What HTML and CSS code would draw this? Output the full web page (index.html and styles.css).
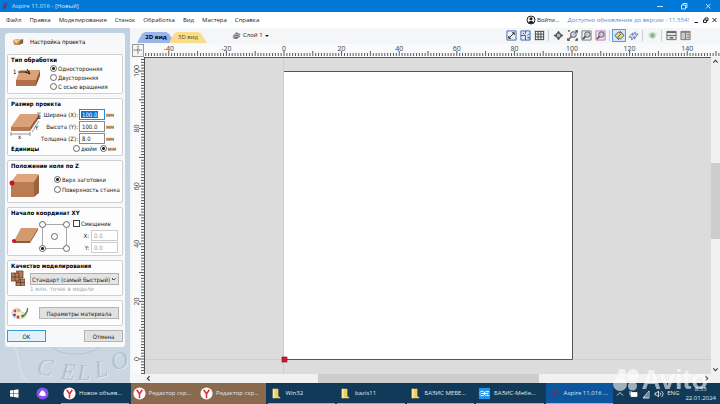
FILE: index.html
```
<!DOCTYPE html>
<html lang="ru">
  <head>
    <meta charset="utf-8">
    <title>Aspire 11.016 - [Новый]</title>
    <meta name="viewport" content="width=device-width, initial-scale=1.0">
    <link rel="stylesheet" href="styles.css">
  </head>
  <body>
    <header class="titlebar">
      <svg class="logo" viewBox="0 0 10 10"><path d="M3 9L4 4L7 1L6 6Z" fill="#8c2348"/></svg>
      <span class="title">Aspire 11.016 - [Новый]</span>
      <button class="win-btn" aria-label="Свернуть"><svg viewBox="0 0 8 8"><path d="M1 4.500H7"/></svg></button>
      <button class="win-btn" aria-label="Развернуть"><svg viewBox="0 0 8 8"><path d="M1.500 3H5.500V7H1.500ZM3 3V1.500H7V5.500H5.500"/></svg></button>
      <button class="win-btn" aria-label="Закрыть"><svg viewBox="0 0 8 8"><path d="M2 2L6.500 6.500M6.500 2L2 6.500"/></svg></button>
    </header>

    <nav class="menu">
      <a href="#">Файл</a>
      <a href="#">Правка</a>
      <a href="#">Моделирование</a>
      <a href="#">Станок</a>
      <a href="#">Обработка</a>
      <a href="#">Вид</a>
      <a href="#">Мастера</a>
      <a href="#">Справка</a>
      <a href="#" class="login">
        <svg viewBox="0 0 10 10"><circle cx="5" cy="5" r="4" fill="#fff" stroke="#222"/><circle cx="5" cy="3.800" r="1.600" fill="#222"/><path d="M2 7.500C3 5.500 7 5.500 8 7.500L5 9Z" fill="#222"/></svg>
        Войти...
      </a>
      <a href="#" class="update">Доступно обновление до версии - 11.554!</a>
      <div class="mdi">
        <button aria-label="Свернуть окно"><svg viewBox="0 0 8 8"><path d="M2 6.500H5.500"/></svg></button>
        <button aria-label="Восстановить окно"><svg viewBox="0 0 8 8"><path d="M2 4H5V6.500H2ZM3.500 4V2H6.500V4.500H5"/></svg></button>
        <button aria-label="Закрыть окно"><svg viewBox="0 0 8 8"><path d="M2 2L6 6M6 2L2 6"/></svg></button>
      </div>
    </nav>

    <main class="main">
      <aside class="side">
        <form class="dialog">
          <h1 class="dialog-title">
            <svg viewBox="0 0 14 10"><path d="M1 4L4 2H13L11 4Z" fill="#e6b982"/><path d="M1 4H9L8 9H3L2 7Z" fill="#c98b4b"/><path d="M9 4L13 2V7L8 9Z" fill="#8c5a2c"/><path d="M2 4L5 7L8 4Z" fill="#f3d7ae"/></svg>
            Настройка проекта
          </h1>

          <section class="card">
            <h2>Тип обработки</h2>
            <div class="row">
              <svg class="pic type-pic" viewBox="0 0 36 26" width="36" height="26">
                <path d="M12 6H32L28 16H8Z" fill="#dba27a"/><path d="M8 16H28V22H8Z" fill="#b06f49"/><path d="M28 16L32 6V12L28 22Z" fill="#8f5636"/>
                <path d="M10 8H22M19 5L22 10L17 8" stroke="#222" fill="none"/><text x="5" y="10">1</text>
              </svg>
              <div class="options">
                <label><input type="radio" name="side" checked>Односторонняя</label>
                <label><input type="radio" name="side">Двусторонняя</label>
                <label><input type="radio" name="side">С осью вращения</label>
              </div>
            </div>
          </section>

          <section class="card">
            <h2>Размер проекта</h2>
            <div class="row">
              <svg class="pic size-pic" viewBox="0 0 34 34" width="34" height="34">
                <path d="M12 6H31L22 19H3Z" fill="#dba27a"/><path d="M3 19H22V23H3Z" fill="#b87a50"/><path d="M22 19L31 6V10L22 23Z" fill="#955d3b"/>
                <path d="M3 26H22M3 24V28M22 24V28M24 24L31 13M31 5V11M29 5H33" stroke="#555" stroke-width=".6" fill="none"/>
                <text x="10" y="31">x</text><text x="27" y="22">Y</text><text x="30" y="11">z</text>
              </svg>
              <div class="fields">
                <label for="w">Ширина (X):</label><input type="text" id="w" class="selected" value="100.0"><span>мм</span>
                <label for="h">Высота (Y):</label><input type="text" id="h" value="100.0"><span>мм</span>
                <label for="t">Толщина (Z):</label><input type="text" id="t" value="8.0"><span>мм</span>
              </div>
            </div>
            <div class="units">
              <h2>Единицы</h2>
              <label><input type="radio" name="unit">дюйм</label>
              <label><input type="radio" name="unit" checked>мм</label>
            </div>
          </section>

          <section class="card">
            <h2>Положение ноля по Z</h2>
            <div class="row">
              <svg class="pic zero-pic" viewBox="0 0 40 30" width="40" height="30">
                <path d="M9 4H30V12H3Z" fill="#e0a57c"/><path d="M3 12H26V27H3Z" fill="#bb7c52"/><path d="M26 12L31 4V23L26 27Z" fill="#9c633f"/><circle cx="4" cy="13" r="2.500" fill="#c3142c"/>
              </svg>
              <div class="options wide">
                <label><input type="radio" name="zero" checked>Верх заготовки</label>
                <label><input type="radio" name="zero">Поверхность станка</label>
              </div>
            </div>
          </section>

          <section class="card">
            <h2>Начало координат XY</h2>
            <div class="row">
              <svg class="pic" viewBox="0 0 30 34" width="30" height="34">
                <path d="M10 11H27L19 24H3Z" fill="#d39a70"/><path d="M3 24H19L27 11V13L19 26H3Z" fill="#8f5a3a"/><circle cx="3" cy="24" r="2" fill="#c3142c"/>
              </svg>
              <div class="anchor">
                <input type="radio" name="anchor" aria-label="Верхний левый">
                <input type="radio" name="anchor" aria-label="Верхний правый">
                <input type="radio" name="anchor" class="mid" aria-label="Центр">
                <input type="radio" name="anchor" aria-label="Нижний левый" checked>
                <input type="radio" name="anchor" aria-label="Нижний правый">
              </div>
              <div class="offset">
                <label class="check"><input type="checkbox">Смещение</label>
                <label for="ox">X:</label><input type="text" id="ox" value="0.0" disabled>
                <label for="oy">Y:</label><input type="text" id="oy" value="0.0" disabled>
              </div>
            </div>
          </section>

          <section class="card">
            <h2><label for="quality">Качество моделирования</label></h2>
            <div class="row quality">
              <svg viewBox="0 0 14 16" width="14" height="16">
                <path d="M0 3H8V11H0ZM5 1H12V8H5ZM5 9H14V16H5Z" fill="#b87c57"/><path d="M0 3H8V11H0ZM4 3V11M0 7H8M5 1H12V8H8M8 9H14V16H5V11M9.500 9V16M5 12.500H14" stroke="#4e3222" stroke-width=".7" fill="none"/>
              </svg>
              <div class="quality-box">
                <select id="quality"><option>Стандарт (самый быстрый)</option></select>
                <p>1 млн. точек в модели</p>
              </div>
            </div>
          </section>

          <section class="card material">
            <svg viewBox="0 0 18 14" width="18" height="14">
              <path d="M1 8C0 2 9 1 10 5C10 8 15 5 15 9C14 14 2 14 1 8Z" fill="#f4efe0" stroke="#b7aa90" stroke-width=".6"/>
              <circle cx="4" cy="5" r="1.400" fill="#df3b30"/><circle cx="7.500" cy="4.500" r="1.400" fill="#e2b81c"/><circle cx="3.500" cy="9" r="1.400" fill="#2d59c4"/><circle cx="7" cy="11" r="1.400" fill="#d1352c"/><circle cx="11.500" cy="10" r="1.400" fill="#37a64c"/>
              <path d="M16.500 2C17 6 14 9 11 11" stroke="#4b7d35" stroke-width="1.300" fill="none"/>
            </svg>
            <button type="button" class="btn">Параметры материала</button>
          </section>

          <div class="actions">
            <button type="button" class="btn primary">OK</button>
            <button type="button" class="btn">Отмена</button>
          </div>
        </form>
        <svg class="deboss" viewBox="0 0 130 35" aria-hidden="true">
          <path d="M52 0C62 9 86 10 100 0" fill="none" stroke="#b5c5d2"/>
          <path d="M14 0C22 8 14 22 28 35" fill="none" stroke="#d3dfe8" stroke-width="2"/>
          <text x="36 60 77 96 114" y="27 32 33 31 24" rotate="8 6 0 -12 -20">CELLO</text>
        </svg>
      </aside>

      <section class="work">
        <div class="tools">
          <div class="tabs">
            <button class="tab active">2D вид</button>
            <button class="tab">3D вид</button>
          </div>
          <button class="layer">
            <svg viewBox="0 0 10 10"><path d="M1 5L5 1.500L9 3V6L5 9L1 8Z" fill="#666"/><path d="M1 5L5 3.500L9 3M1 7L5 6L9 5" stroke="#eee" stroke-width=".8" fill="none"/></svg>
            Слой 1<span class="caret"></span>
          </button>
          <div class="icons">
            <button aria-label="Показать всё"><svg viewBox="0 0 12 12"><path d="M1 1H11V11H1Z" fill="#eef4ff" stroke="#3c62a8"/><path d="M3 9L9 3M6.500 3H9V5.500M3 6.500V9H5.500" stroke="#222" fill="none"/></svg></button>
            <button aria-label="Привязка"><svg viewBox="0 0 12 12"><path d="M1 1H11V11H1Z" fill="#e2ecfa" stroke="#3c62a8"/><path d="M1 6H6V11M6 1V4M8 6L10 4M3 3L5 5M8 8H10V10" stroke="#35528f" fill="none"/></svg></button>
            <button aria-label="Сетка"><svg viewBox="0 0 12 12"><path d="M1 1.500H11M1 4.500H11M1 7.500H11M1 10.500H11M1.500 1V11M4.500 1V11M7.500 1V11M10.500 1V11" stroke="#444"/></svg></button>
            <i></i>
            <button aria-label="Панорама"><svg viewBox="0 0 12 12"><path d="M6 1L8 4H4ZM6 11L8 8H4ZM1 6L4 4V8ZM11 6L8 4V8Z" fill="#555" stroke="#333" stroke-width=".5"/><path d="M4.500 4.500H7.500V7.500H4.500Z" fill="#aaa"/></svg></button>
            <button aria-label="Масштаб рамкой"><svg viewBox="0 0 12 12"><path d="M1 1H3M9 1H11V3M1 9V11H3M9 11H11V9" stroke="#333" stroke-width="1.500" fill="none"/><path d="M2 10L5 7" stroke="#b06a55" stroke-width="2"/><circle cx="7" cy="5" r="3.200" fill="#c4cbe4" stroke="#555"/></svg></button>
            <button aria-label="Масштаб листа"><svg viewBox="0 0 12 12"><path d="M1 1H11V11H1Z" fill="#eee" stroke="#777"/><path d="M2 10L5 7" stroke="#555" stroke-width="2"/><circle cx="7" cy="5" r="3" fill="#c4cbe4" stroke="#555"/></svg></button>
            <button aria-label="Масштаб выбранного"><svg viewBox="0 0 12 12"><path d="M1 1H11V11H1Z" fill="#f3e2f6" stroke="#b27cc0"/><path d="M2 10L5 7" stroke="#a14444" stroke-width="2"/><circle cx="7" cy="5" r="3" fill="#c9c4e4" stroke="#555"/></svg></button>
            <i></i>
            <button class="on" aria-label="Сплошная заливка"><svg viewBox="0 0 12 12"><path d="M1 6L5 2L6.500 3.500L7 1.500L11 6L7 10L5.500 8.500L5 10.500Z" fill="#f2dd49" stroke="#3c4da0"/><path d="M4 8L8 4" stroke="#3c4da0"/></svg></button>
            <button aria-label="Векторы"><svg viewBox="0 0 12 12"><path d="M1 8L5 3L5 6L8 2V5L11 4L7 10V7L4 11V8Z" fill="#dde0f6" stroke="#7380bb"/></svg></button>
            <i></i>
            <button aria-label="Слои модели"><svg viewBox="0 0 12 12"><path d="M1 4L6 1.500L11 4L9 9L6 10L2 8Z" fill="#cfe3cf"/><circle cx="6" cy="6" r="2.500" fill="#89b58d"/></svg></button>
            <i></i>
            <button aria-label="Разделить по горизонтали"><svg viewBox="0 0 12 12"><path d="M1 1.500H11V10.500H1ZM1 6H11" fill="#e6e6e6" stroke="#666"/><path d="M1 2.500H11M4 8.500H8" stroke="#666" stroke-width="1.500"/></svg></button>
            <button aria-label="Разделить по вертикали"><svg viewBox="0 0 12 12"><path d="M1 1.500H11V10.500H1ZM6 1V11" fill="#c9c9c9" stroke="#777"/><path d="M1 2.500H11M8 5H10M8 8H10" stroke="#777"/></svg></button>
          </div>
        </div>

        <div class="view">
          <div class="corner"><svg viewBox="0 0 12 12"><path d="M6 1V11M1 6H11" stroke="#333" stroke-dasharray="2 1"/></svg></div>
          <svg class="ruler-h" id="rulerH"></svg>
          <svg class="ruler-v" id="rulerV"></svg>
          <svg class="canvas">
            <path d="M138.500 0V400M0 301.500H1600" stroke="#cfcfcf"/>
            <rect x="139" y="14" width="288" height="287" fill="#fff"/>
            <path d="M139 13.500H427.500V301.500H139" fill="none" stroke="#555"/>
            <rect x="137" y="299" width="5" height="5" fill="#d8142f" stroke="#7a0d1c" stroke-width=".6"/>
          </svg>
          <div class="scroll-v">
            <svg viewBox="0 0 8 8"><path d="M2 5L4 3L6 5"/></svg>
            <div class="thumb"></div>
            <svg viewBox="0 0 8 8"><path d="M2 3L4 5L6 3"/></svg>
          </div>
          <div class="scroll-h">
            <svg viewBox="0 0 8 8"><path d="M5 2L3 4L5 6"/></svg>
            <div class="thumb"></div>
            <svg viewBox="0 0 8 8"><path d="M3 2L5 4L3 6"/></svg>
          </div>
        </div>
      </section>
    </main>

    <footer class="taskbar">
      <button class="start" aria-label="Пуск"><svg viewBox="0 0 10 10"><path d="M1 2L4.500 1.500V4.700H1ZM5 1.400L9.500 .7V4.700H5ZM1 5.200H4.500V8.500L1 8ZM5 5.200H9.500V9.300L5 8.600Z" fill="#fff"/></svg></button>
      <button class="start" aria-label="Алиса"><svg viewBox="0 0 14 14"><circle cx="7" cy="7" r="6.500" fill="#8a4df0"/><path d="M7 3.500C8.500 3.500 11 8 10.500 9C10 10.200 4 10.200 3.500 9C3 8 5.500 3.500 7 3.500Z" fill="#fff"/></svg></button>
      <div class="tasks">
        <button class="task"><svg viewBox="0 0 14 14"><circle cx="7" cy="7" r="6.500" fill="#fff"/><path d="M4 3L7 7.500L10 3M7 7V12" stroke="#e0303a" stroke-width="1.700" fill="none"/></svg><span>Новое объяв...</span></button>
        <button class="task brown"><svg viewBox="0 0 14 14"><circle cx="7" cy="7" r="6.500" fill="#fff"/><path d="M4 3L7 7.500L10 3M7 7V12" stroke="#e0303a" stroke-width="1.700" fill="none"/></svg><span>Редактор скр...</span></button>
        <button class="task brown"><svg viewBox="0 0 14 14"><circle cx="7" cy="7" r="6.500" fill="#fff"/><path d="M4 3L7 7.500L10 3M7 7V12" stroke="#e0303a" stroke-width="1.700" fill="none"/></svg><span>Редактор скр...</span></button>
        <button class="task"><svg viewBox="0 0 14 14"><path d="M3 2H9V10L11 11V12H3Z" fill="#f2cf62"/><path d="M3 2H5V12H3Z" fill="#fbe9a6"/></svg><span>Win32</span></button>
        <button class="task"><svg viewBox="0 0 14 14"><path d="M3 2H9V10L11 11V12H3Z" fill="#f2cf62"/><path d="M3 2H5V12H3Z" fill="#fbe9a6"/></svg><span>bazis11</span></button>
        <button class="task"><svg viewBox="0 0 14 14"><path d="M3 2H9V10L11 11V12H3Z" fill="#f2cf62"/><path d="M3 2H5V12H3Z" fill="#fbe9a6"/></svg><span>БАЗИС МЕБЕ...</span></button>
        <button class="task"><svg viewBox="0 0 14 14"><path d="M1 1H13V13H1Z" fill="#2196ee"/><path d="M2 6C3 4 5 4 7 6M2 8C3 10 5 10 7 8M12 5H8L6 7L8 9H12M3 7H11" stroke="#fff" fill="none"/></svg><span>БАЗИС-Мебе...</span></button>
        <button class="task current"><svg viewBox="0 0 14 14"><path d="M5 12L6 6L10 2L8 8Z" fill="#8c2348"/></svg><span>Aspire 11.016 ...</span></button>
      </div>
      <div class="tray">
        <svg viewBox="0 0 10 10"><path d="M2 6.500L5 3.500L8 6.500"/></svg>
        <svg viewBox="0 0 10 10"><path d="M3 3.500H9V7.500H3Z" fill="#fff"/><path d="M1 3H4M1 5H3"/></svg>
        <svg viewBox="0 0 10 10"><path d="M2 9L8 2V9ZM4 9V7M6 9V5"/></svg>
        <svg viewBox="0 0 10 10"><path d="M1 4H2.500L4.500 2V8L2.500 6H1ZM6 3.500C7 4.500 7 5.500 6 6.500M7.500 2C9.500 4 9.500 6 7.500 8"/></svg>
        <span>ENG</span>
        <time><span>8:55</span><span>22.01.2024</span></time>
      </div>
    </footer>

    <div class="watermark">
      <svg viewBox="0 0 28 24"><circle cx="9" cy="5" r="4"/><circle cx="20" cy="7" r="6"/><circle cx="7" cy="16" r="7"/><circle cx="19.500" cy="18" r="4.500"/></svg>
      <span>Avito</span>
    </div>

    <script>
    // origin of the job in ruler pixels and the current zoom
    var originX = 140;
    var originY = 302;
    var scale = 2.88;

    function tickSize(n) {
      return n % 10 === 0 ? 5 : 3;
    }

    function drawRulers() {
      var rulerH = document.getElementById('rulerH');
      var rulerV = document.getElementById('rulerV');
      var width = rulerH.clientWidth;
      var height = rulerV.clientHeight;
      var h = '';
      var v = '';
      for (var n = -60; n <= 1000; n++) {
        var x = originX + n * scale;
        var y = originY - n * scale;
        if (x > 0 && x < width) {
          h += '<path d="M' + x + ' 12v-' + tickSize(n) + '"/>';
        }
        if (y > 0 && y < height) {
          v += '<path d="M12 ' + y + 'h-' + tickSize(n) + '"/>';
        }
        if (n % 20 === 0 && x > 10 && x < width - 10) {
          h += '<text x="' + x + '" y="7">' + n + '</text>';
        }
        if (n % 20 === 0 && n >= 0 && y > 8) {
          v += '<text transform="translate(7 ' + y + ') rotate(-90)">' + n + '</text>';
        }
      }
      rulerH.innerHTML = h;
      rulerV.innerHTML = v;
    }

    drawRulers();
    window.addEventListener('resize', drawRulers);
    </script>
  </body>
</html>
```
FILE: styles.css
```
* {
  box-sizing: border-box;
}
body {
  margin: 0;
  height: 100vh;
  display: flex;
  flex-direction: column;
  overflow: hidden;
  font-family: "Open Sans", "Noto Sans", sans-serif;
  font-size: 6px;
  line-height: 9px;
  color: #222;
}
button, input, select {
  font: inherit;
  color: inherit;
  margin: 0;
  padding: 0;
  border: 0;
  background: none;
  border-radius: 0;
}
h1, h2, p {
  margin: 0;
}
a {
  color: inherit;
  text-decoration: none;
}
svg {
  display: block;
  flex: none;
}

/* title bar */
.titlebar {
  display: flex;
  align-items: center;
  height: 12px;
  background: #0078d7;
  color: #d5e8f8;
}
.logo {
  width: 10px;
  height: 10px;
}
.title {
  flex: 1;
  padding-left: 2px;
}
.win-btn {
  width: 24px;
}
.win-btn svg {
  width: 8px;
  height: 8px;
  margin: auto;
  fill: none;
  stroke: #cfe5f7;
}

/* menu */
.menu {
  display: flex;
  align-items: center;
  gap: 8px;
  height: 16px;
  padding: 0 1px 0 6px;
  background: #fff;
}
.login {
  display: flex;
  align-items: center;
  gap: 1px;
  margin-left: auto;
}
.login svg {
  width: 10px;
  height: 10px;
}
.update {
  color: #4a90d0;
}
.mdi {
  display: flex;
  margin-left: -5px;
}
.mdi svg {
  width: 9px;
  height: 8px;
  fill: none;
  stroke: #222;
}

.main {
  flex: 1;
  display: flex;
  min-height: 0;
}

/* left panel */
.side {
  flex: none;
  width: 130px;
  padding: 5px 5px 0;
  background: linear-gradient(#c0d1e2, #cad7e1);
  font-family: "DejaVu Sans Condensed", "DejaVu Sans", sans-serif;
  overflow: hidden;
}
.dialog {
  display: flex;
  flex-direction: column;
  gap: 4px;
  padding: 0 2px 5px;
  background: #f7f8f9;
  border-radius: 3px;
}
.dialog-title {
  display: flex;
  align-items: center;
  gap: 6px;
  height: 17px;
  padding-left: 5px;
  font-size: 6px;
  font-weight: normal;
  color: #000;
}
.dialog-title svg {
  width: 12px;
  height: 9px;
}
.card {
  padding: 0 3px 2px;
  border: 1px solid #cfcfcf;
  border-radius: 2px;
  background: #fdfdfd;
}
.card h2 {
  font-size: 6px;
  line-height: 9px;
  color: #000;
}
.row {
  display: flex;
}
.pic {
  margin-right: 3px;
}
.pic text {
  font-size: 6px;
}
.card label {
  white-space: nowrap;
}
.options label {
  display: flex;
  align-items: center;
  gap: 1px;
  height: 9px;
}
.options.wide label {
  height: 10px;
}
.options.wide {
  padding: 4px 0 6px;
}
.type-pic, .size-pic, .zero-pic {
  margin-left: -3px;
  margin-right: 6px;
}
.size-pic {
  margin-right: -6px;
}
input[type=radio] {
  appearance: none;
  flex: none;
  width: 7px;
  height: 7px;
  border: 1px solid #666;
  border-radius: 50%;
  background: #fff;
}
input[type=radio]:checked {
  background: radial-gradient(circle, #222 0, #222 1px, #fff 2px);
}
input[type=checkbox] {
  appearance: none;
  flex: none;
  width: 7px;
  height: 7px;
  border: 1px solid #444;
  background: #fff;
}
.fields {
  flex: 1;
  display: grid;
  grid-template-columns: 1fr 26px 13px;
  grid-auto-rows: 12px;
  align-items: center;
  column-gap: 1px;
  text-align: right;
}
.fields span {
  text-align: left;
}
input[type=text] {
  width: 26px;
  height: 11px;
  padding: 0 2px;
  border: 1px solid #8a8a8a;
  background: #fff;
}
input.selected {
  border-color: #2d8bd8;
  color: #fff;
  background: linear-gradient(#0a6fce, #0a6fce) 1px 1px / 17px 7px no-repeat #fff;
}
input:disabled {
  border-color: #ccc;
  color: #999;
}
.units {
  display: flex;
  align-items: center;
  gap: 3px;
  height: 9px;
  padding-right: 3px;
}
.units h2 {
  flex: 1;
}
.units label {
  display: flex;
  align-items: center;
  gap: 1px;
}
.anchor {
  display: grid;
  grid-template-columns: 7px 7px;
  justify-content: space-between;
  justify-items: center;
  align-content: space-between;
  width: 31px;
  height: 31px;
  margin-top: 4px;
  background: linear-gradient(#aaa, #aaa) center 3px / 24px 1px no-repeat,
    linear-gradient(#aaa, #aaa) center 27px / 24px 1px no-repeat,
    linear-gradient(#aaa, #aaa) 3px center / 1px 24px no-repeat,
    linear-gradient(#aaa, #aaa) 27px center / 1px 24px no-repeat;
}
.anchor .mid {
  grid-column: 1 / 3;
}
.row .pic + .anchor {
  margin-left: -5px;
}
.offset {
  flex: 1;
  display: grid;
  grid-template-columns: 1fr 27px;
  grid-auto-rows: 12px;
  align-items: center;
  column-gap: 2px;
  margin: 0 1px 0 3px;
  text-align: right;
}
.offset input[type=text] {
  width: 27px;
}
.offset .check {
  grid-column: 1 / 3;
  display: flex;
  align-items: center;
  gap: 1px;
}
.quality {
  gap: 5px;
}
.quality > svg {
  margin-bottom: 5px;
}
.quality-box {
  flex: 1;
  padding-top: 3px;
}
select {
  display: block;
  appearance: none;
  width: 100%;
  height: 12px;
  padding: 0 0 0 1px;
  border: 1px solid #b0b0b0;
  background: linear-gradient(45deg, transparent 50%, #666 50%, #666 75%, transparent 75%) right 4px center / 3px 3px no-repeat,
    linear-gradient(-45deg, transparent 50%, #666 50%, #666 75%, transparent 75%) right 1px center / 3px 3px no-repeat, #e4e4e4;
}
.quality p {
  line-height: 8px;
  color: #aaa;
}
.material {
  display: flex;
  align-items: center;
  justify-content: space-between;
  height: 26px;
  padding: 0 3px;
}
.btn {
  width: 39px;
  height: 12px;
  border: 1px solid #b5b5b5;
  background: #e1e1e1;
  white-space: nowrap;
}
.material .btn {
  width: 80px;
}
.primary {
  border-color: #3c9ad2;
  background: #e3f2fa;
}
.actions {
  display: flex;
  justify-content: space-between;
}
.deboss {
  width: 130px;
  height: 35px;
  margin-left: -5px;
}
.deboss text {
  font: italic 24px "Liberation Serif", serif;
  fill: #b1c1cd;
  filter: drop-shadow(1px 1px 0 #dde6ec);
}

/* work area */
.work {
  flex: 1;
  min-width: 0;
  display: flex;
  flex-direction: column;
  padding-left: 2px;
  background: #f4f6f8;
}
.tools {
  display: flex;
  align-items: flex-end;
  height: 16px;
  padding: 0 28px 1px 5px;
}
.tabs {
  display: flex;
  margin-right: 31px;
}
.tab {
  width: 38px;
  height: 11px;
  margin-right: -6px;
  background: #f9dd88;
  color: #5e4c16;
  clip-path: polygon(0 100%, 5px 15%, 8px 0, 29px 0, 32px 15%, 100% 100%);
}
.tab.active {
  background: #9db4ea;
  color: #000;
  font-weight: bold;
}
.layer {
  display: flex;
  align-items: center;
  gap: 2px;
  height: 15px;
}
.layer svg {
  width: 9px;
  height: 9px;
}
.caret {
  border: 2px solid transparent;
  border-top-color: #222;
  border-bottom: 0;
}
.icons {
  display: flex;
  align-items: center;
  height: 15px;
  margin-left: auto;
}
.icons button {
  display: grid;
  place-items: center;
  width: 14px;
  height: 13px;
}
.icons svg {
  width: 11px;
  height: 11px;
}
.icons .on {
  border: 1px solid #5a9ae0;
  background: #d3e6fa;
}
.icons i {
  width: 1px;
  height: 11px;
  margin: 0 2px;
  background: #ccc;
}
.view {
  flex: 1;
  min-height: 0;
  display: grid;
  grid-template-columns: 12px 1fr 9px;
  grid-template-rows: 13px 1fr 9px;
}
.view svg {
  min-width: 0;
  min-height: 0;
  overflow: hidden;
}
.corner {
  border: 1px solid #999;
}
.corner svg {
  width: 10px;
  height: 10px;
}
.ruler-h {
  grid-column: 2 / 4;
  width: 100%;
  height: 13px;
}
.ruler-v {
  width: 12px;
  height: 100%;
}
.ruler-h, .ruler-v {
  background: #f8fafb;
  stroke: #555;
}
.ruler-h text, .ruler-v text {
  stroke: none;
  fill: #444;
  font-size: 7px;
  text-anchor: middle;
}
.canvas {
  width: 100%;
  height: 100%;
  border: solid #555;
  border-width: 1px 0 0 1px;
  background: #dcdcdc;
}
.scroll-v, .scroll-h {
  display: flex;
  background: #f1f1f1;
}
.scroll-v {
  flex-direction: column;
  justify-content: space-between;
}
.scroll-h {
  grid-column: 2 / 4;
  justify-content: space-between;
  padding-right: 9px;
}
.scroll-v svg, .scroll-h svg {
  width: 9px;
  height: 9px;
  fill: none;
  stroke: #444;
}
.thumb {
  background: #cdcdcd;
}
.scroll-v .thumb {
  height: 24%;
  margin-bottom: 29px;
}
.scroll-h .thumb {
  width: 39%;
  margin-left: 2px;
}

/* taskbar */
.taskbar {
  display: flex;
  height: 21px;
  background: #123a58;
  color: #dfe9f1;
}
.start {
  width: 28px;
}
.start svg {
  width: 13px;
  height: 13px;
  margin: auto;
}
.start:first-child svg {
  width: 10px;
}
.tasks {
  flex: 1;
  display: flex;
  gap: 2px;
  margin-left: 5px;
}
.task {
  flex: 1 1 0;
  display: flex;
  align-items: center;
  gap: 3px;
  min-width: 0;
  padding-left: 2px;
  border-bottom: 1px solid #76b9ed;
  white-space: nowrap;
}
.task svg {
  width: 13px;
  height: 13px;
}
.brown {
  background: #8a6a4e;
  border-color: #8a6a4e;
}
.brown + .brown {
  margin-left: -2px;
}
.current {
  background: #0d559c;
}
.tray {
  display: flex;
  align-items: center;
  gap: 3px;
  padding: 0 4px 0 2px;
}
.tray svg {
  width: 10px;
  height: 10px;
  fill: none;
  stroke: #fff;
  stroke-width: .8;
}
time {
  display: flex;
  flex-direction: column;
  align-items: center;
  padding-left: 3px;
}

.watermark {
  position: absolute;
  right: 12px;
  bottom: 12px;
  display: flex;
  align-items: center;
  gap: 1px;
  color: #fff;
  opacity: .6;
  font: bold 27px/24px "Liberation Sans", sans-serif;
}
.watermark svg {
  width: 28px;
  height: 24px;
  fill: #fff;
}
```
